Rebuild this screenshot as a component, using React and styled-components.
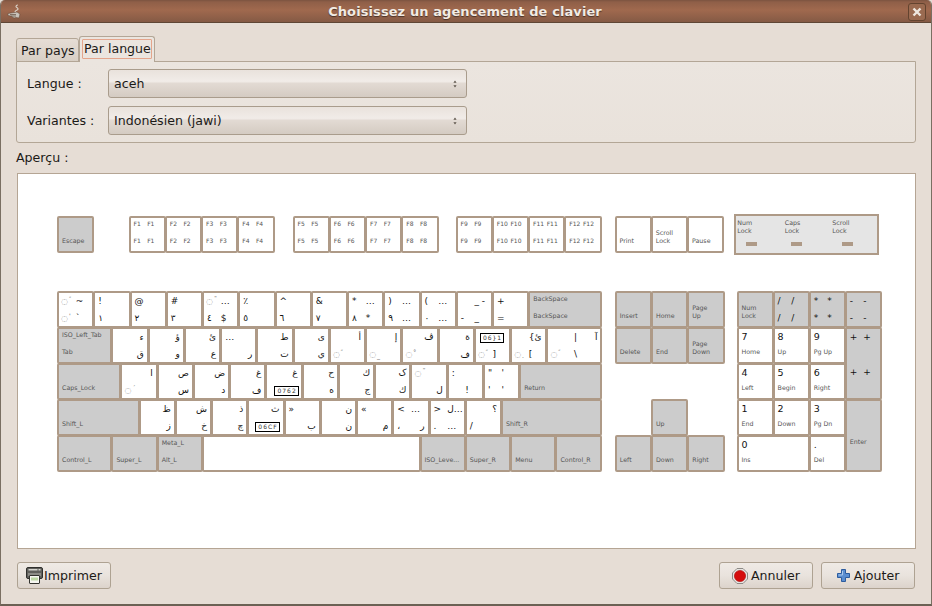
import styled, { createGlobalStyle } from "styled-components";

const GlobalStyle = createGlobalStyle`
  html, body { margin: 0; padding: 0; background: #e6ddd5; }
  body { font-family: "DejaVu Sans", "Noto Sans", sans-serif; font-size: 12.6px; color: #1c1a17; }
`;

const UNIT = 36.25;

// legend order: top left, top right, bottom left, bottom right
const sym = (tl = "", tr = "", bl = "", br = "", u = 1) => ({ kind: "sym", l: [tl, tr, bl, br], u });
const fn = (name) => ({ kind: "fn", l: [name, name, name, name], u: 1 });
const named = (name, u = 1, top = "") => ({ kind: "name", gray: true, l: [top, "", name, ""], u });
const stacked = (text, gray = true) => ({ kind: "name", gray, stack: text, u: 1 });
const pad = (digit, name) => ({ kind: "pad", l: [digit, "", name, ""], u: 1 });
const graySym = (a, b, rows = 1) => ({ kind: "sym", gray: true, l: [a, a, b, b], u: 1, rows });

const HexBox = styled.span`
  display: inline-block;
  border: 1px solid #000;
  font-size: 6px;
  line-height: 8px;
  letter-spacing: 1px;
  padding: 0 1px 0 2px;
  margin-left: ${(p) => p.$left || 0}px;
  color: #333;
`;

const RingGlyph = styled.span`
  font-size: 8px;
  color: #8a8a8a;
  margin-left: -1px;
  sup {
    font-size: 6px;
    line-height: 0;
    vertical-align: 3px;
    margin-left: 1px;
    color: #555;
  }
  sub {
    font-size: 6px;
    line-height: 0;
    vertical-align: -1px;
    margin-left: 1px;
    color: #555;
  }
`;

const ring = (mark, below) => (
  <RingGlyph>
    {"\u25CC"}
    {below ? <sub>{mark}</sub> : <sup>{mark}</sup>}
  </RingGlyph>
);

const alphaKeys = [
  sym(ring("\u2033"), "~", ring("'"), "`"),
  sym("!", "", "\u0661"),
  sym("@", "", "\u0662"),
  sym("#", "", "\u0663"),
  sym(ring("\u02DC"), "\u2026", "\u0664", "$"),
  sym("\u066A", "", "\u0665"),
  sym("^", "", "\u0666"),
  sym("&", "", "\u0667"),
  sym("*", "\u2026", "\u0668", "*"),
  sym(")", "\u2026", "\u0669", "\u2026"),
  sym("(", "\u2026", "\u0660", "\u2026"),
  sym("", "_ -", "-", "_"),
  sym("+", "", "="),
  { kind: "name", gray: true, l: ["BackSpace", "", "BackSpace", ""], u: 2 },

  { kind: "name", gray: true, l: ["ISO_Left_Tab", "", "Tab", ""], u: 1.5 },
  sym("", "\u0621", "", "\u0642"),
  sym("", "\u0624", "", "\u0648"),
  sym("", "\u0626", "", "\u0639"),
  sym("\u2026", "", "", "\u0631"),
  sym("", "\u0637", "", "\u062A"),
  sym("", "\u0649", "", "\u064A"),
  sym("", "\u0623", ring("\u2033"), ""),
  sym("", "\u0625", ring("_", true), ""),
  sym("", "\u06A4", ring("\u00B0"), ""),
  sym("", "\u0629", "", "\u0641"),
  sym(<HexBox $left={1}>06}1</HexBox>, "", ring("\u2033"), "]"),
  sym("", "\u200E{\u0626", ring(".", true), "["),
  sym("", "\u200E|\u2003\u2003\u0622", ring("\u2033"), "\\", 1.5),

  named("Caps_Lock", 1.75),
  sym("", "\u0627", ring("\u02CA"), ""),
  sym("", "\u0635", "", "\u0633"),
  sym("", "\u0636", "", "\u062F"),
  sym("", "\u063A", "", "\u0641"),
  sym("", "\u063A", <HexBox $left={4}>0762</HexBox>, ""),
  sym("", "\u062D", "", "\u0647"),
  sym("", "\u0643", "", "\u062C"),
  sym("", "\u06A9", "", "\u0643"),
  sym(ring("\u02DC"), "", "", "\u0644"),
  sym(":", "", "", "!"),
  sym('"', "'", "'", "'"),
  named("Return", 2.25),

  named("Shift_L", 2.25),
  sym("", "\u0638", "", "\u0632"),
  sym("", "\u0634", "", "\u062E"),
  sym("", "\u0630", "", "\u0686"),
  sym("", "\u062B", <HexBox $left={3}>06CF</HexBox>, ""),
  sym("\u00BB", "", "", "\u0628"),
  sym("", "\u0646", "", "\u0646"),
  sym("\u00AB", "", "", "\u0645"),
  sym("<", "\u2026", "\u060C", "\u0631"),
  sym(">", "\u200E\u0644\u2026", ".", "\u2026"),
  sym("", "\u061F", "/", ""),
  named("Shift_R", 2.75),

  named("Control_L", 1.5),
  named("Super_L", 1.25),
  named("Alt_L", 1.25, "Meta_L"),
  { kind: "sym", l: ["", "", "", ""], u: 6 },
  named("ISO_Leve...", 1.25),
  named("Super_R", 1.25),
  named("Menu", 1.25),
  named("Control_R", 1.25),
];

const navKeys = [
  named("Insert"), named("Home"), stacked("Page\nUp"),
  named("Delete"), named("End"), stacked("Page\nDown"),
  null, null, null,
  null, named("Up"), null,
  named("Left"), named("Down"), named("Right"),
];

const numpadKeys = [
  stacked("Num\nLock"), graySym("/", "/"), graySym("*", "*"), graySym("-", "-"),
  pad("7", "Home"), pad("8", "Up"), pad("9", "Pg Up"), graySym("+", "+", 2),
  pad("4", "Left"), pad("5", "Begin"), pad("6", "Right"),
  pad("1", "End"), pad("2", "Down"), pad("3", "Pg Dn"), { ...named("Enter"), rows: 2 },
  { ...pad("0", "Ins"), cols: 2 }, pad(".", "Del"),
];

const leds = [
  { label: "Num\nLock", offset: 9 },
  { label: "Caps\nLock", offset: 6 },
  { label: "Scroll\nLock", offset: 10 },
];

const Window = styled.div`
  box-sizing: border-box;
  width: 932px;
  height: 606px;
  display: flex;
  flex-direction: column;
  background: #e6ddd5;
  border-left: 1px solid #7a6f62;
  border-right: 1px solid #7a6f62;
  border-bottom: 2px solid #6b6154;
  border-radius: 5px 5px 0 0;
  overflow: hidden;
`;

const TitleBar = styled.div`
  flex: none;
  height: 23px;
  display: flex;
  align-items: center;
  padding: 0 5px 0 6px;
  background: linear-gradient(#7b5340 0, #8f5f48 2px, #a0694e 10px, #8e5f48 18px, #825843 23px);
  border-bottom: 1px solid #5f4635;
  box-sizing: border-box;
`;

const Title = styled.div`
  flex: 1;
  text-align: center;
  font-weight: bold;
  font-size: 13px;
  letter-spacing: 0.09px;
  color: #f2ebe3;
  text-shadow: 0 1px 1px #4a3226;
`;

const CloseButton = styled.div`
  box-sizing: border-box;
  width: 18px;
  height: 18px;
  margin-top: 1px;
  display: flex;
  align-items: center;
  justify-content: center;
  border: 1px solid #63432f;
  border-radius: 3px;
  background: #9a6a50;
`;

const Body = styled.div`
  flex: 1;
  display: flex;
  flex-direction: column;
  padding: 13px 15px 0 15px;
`;

const Tabs = styled.div`
  display: flex;
  align-items: flex-end;
  margin-bottom: -1px;
  position: relative;
  z-index: 1;
`;

const Tab = styled.div`
  box-sizing: border-box;
  width: ${(p) => p.$w}px;
  height: ${(p) => (p.$active ? 26 : 24)}px;
  padding: ${(p) => (p.$active ? "2px 2px 0" : "4px 0 0 4px")};
  border: 1px solid #b3a696;
  border-bottom: ${(p) => (p.$active ? "none" : "1px solid #b3a696")};
  border-radius: 3px 3px 0 0;
  background: ${(p) => (p.$active ? "#ebe5df" : "linear-gradient(#e6ddd5, #d8cfc5)")};
`;

const TabFocus = styled.div`
  height: 20px;
  line-height: 17px;
  box-sizing: border-box;
  padding-left: 1px;
  border: 1px solid #e4a58c;
  border-radius: 1px;
  white-space: nowrap;
`;

const Panel = styled.div`
  box-sizing: border-box;
  height: 82px;
  padding: 7px 0 0 10px;
  border: 1px solid #b3a696;
  border-radius: 0 0 3px 3px;
  background: linear-gradient(#ebe5df, #e9e2db);
  display: flex;
  flex-direction: column;
  gap: 8px;
`;

const FieldRow = styled.div`
  display: flex;
  align-items: center;
`;

const FieldLabel = styled.div`
  width: 81px;
`;

const Combo = styled.div`
  box-sizing: border-box;
  width: 359px;
  height: 29px;
  padding: 0 9px 0 5px;
  display: flex;
  align-items: center;
  justify-content: space-between;
  border: 1px solid #a99c8c;
  border-radius: 3px;
  background: linear-gradient(#e9e2dc 0, #f1ece8 42%, #e2dad3 50%, #d4cbc2 100%);
`;

const PreviewLabel = styled.div`
  margin: 7px 0 8px 0;
  line-height: 15px;
`;

const Canvas = styled.div`
  box-sizing: border-box;
  height: 376px;
  width: 899px;
  margin-left: 1px;
  padding: 42px 0 0 39px;
  background: #fff;
  border: 1px solid #b5a594;
  opacity: 0.999;
`;

const KeyRow = styled.div`
  display: flex;
  align-items: flex-start;
  margin-top: ${(p) => p.$top || 0}px;
`;

const KeyGroup = styled.div`
  flex: none;
  margin-left: ${(p) => p.$gap || 0}px;
  display: grid;
  grid-template-columns: repeat(${(p) => p.$cols}, ${(p) => p.$pitch}px);
  grid-auto-rows: 36.1px;
`;

const KeyCap = styled.div`
  box-sizing: border-box;
  min-width: 0;
  grid-column: span ${(p) => p.$span};
  grid-row: span ${(p) => p.$rows};
  margin: 0 -1px -1px 0;
  padding: 0 3px;
  display: grid;
  grid-template-columns: minmax(0, 1fr) minmax(0, 1fr);
  grid-template-rows: minmax(0, 1fr) minmax(0, 1fr);
  border: 2px solid #ae9a87;
  border-radius: 2px;
  background: ${(p) => (p.$gray ? "#cccccc" : "#ffffff")};
  font-family: "DejaVu Sans", sans-serif;
`;

const SIZES = { sym: 9, fn: 6, name: 6.3 };
const Legend = styled.span`
  align-self: start;
  white-space: pre;
  text-align: start;
  margin-top: ${(p) => (p.$big ? 2 : p.$size === 9 ? 3 : 2)}px;
  font-size: ${(p) => p.$size}px;
  line-height: ${(p) => (p.$size === 9 ? 10 : p.$big ? 11 : 8)}px;
  color: ${(p) => (p.$size >= 9 ? "#111" : "#555")};
`;

const StackedName = styled.span`
  grid-column: 1 / 3;
  grid-row: 1 / 3;
  align-self: end;
  margin-bottom: 7px;
  white-space: pre;
  font-size: 6.3px;
  line-height: 7.5px;
  color: #555;
`;

const LedPanel = styled.div`
  flex: none;
  box-sizing: border-box;
  width: 145px;
  height: 41px;
  margin: -2px 0 0 11px;
  padding: 0 0 0 1px;
  display: grid;
  grid-template-columns: repeat(3, 47.5px);
  border: 2px solid #ae9a87;
  background: #e5e5e5;
`;

const LedCell = styled.div`
  display: flex;
  flex-direction: column;
  padding-top: 3px;
`;

const LedLabel = styled.span`
  white-space: pre;
  font-size: 6.3px;
  line-height: 7.5px;
  color: #555;
`;

const LedBar = styled.div`
  width: 11px;
  height: 4px;
  margin: 8px 0 0 ${(p) => p.$offset}px;
  background: #ae9a87;
`;

const Footer = styled.div`
  display: flex;
  justify-content: space-between;
  padding: 13px 1px 0 1px;
`;

const ButtonGroup = styled.div`
  display: flex;
  gap: 8px;
`;

const Button = styled.div`
  box-sizing: border-box;
  width: 94px;
  height: 27px;
  display: flex;
  align-items: center;
  justify-content: center;
  gap: ${(p) => p.$gap}px;
  border: 1px solid #aea292;
  border-radius: 3px;
  background: linear-gradient(#efeae5 0, #e9e3dd 50%, #dcd3cb 100%);
`;

function Key({ spec }) {
  const { kind, gray, l, u, stack, rows = 1, cols } = spec;
  const span = cols || Math.round(u * 4);
  return (
    <KeyCap $span={span} $rows={rows} $gray={gray}>
      {stack ? (
        <StackedName>{stack}</StackedName>
      ) : (
        l.map((text, i) => {
          const big = kind === "pad" && i === 0;
          const size = big ? 9.5 : kind === "pad" ? SIZES.name : SIZES[kind];
          return (
            <Legend key={i} dir="auto" $size={size} $big={big}>
              {text}
            </Legend>
          );
        })
      )}
    </KeyCap>
  );
}

function TopGroup({ gap, keys }) {
  return (
    <KeyGroup $gap={gap} $cols={keys.length * 4} $pitch={UNIT / 4}>
      {keys.map((spec, i) => (
        <Key key={i} spec={spec} />
      ))}
    </KeyGroup>
  );
}

function fnGroup(from) {
  return [0, 1, 2, 3].map((i) => fn("F" + (from + i)));
}

const EmptySlot = styled.div`
  grid-column: span 4;
`;

function Keyboard() {
  return (
    <Canvas>
      <KeyRow>
        <TopGroup keys={[named("Escape")]} />
        <TopGroup gap={UNIT - 1} keys={fnGroup(1)} />
        <TopGroup gap={19} keys={fnGroup(5)} />
        <TopGroup gap={18} keys={fnGroup(9)} />
        <TopGroup
          gap={14}
          keys={[
            { ...named("Print"), gray: false },
            stacked("Scroll\nLock", false),
            { ...named("Pause"), gray: false },
          ]}
        />
        <LedPanel>
          {leds.map((led) => (
            <LedCell key={led.label}>
              <LedLabel>{led.label}</LedLabel>
              <LedBar $offset={led.offset} />
            </LedCell>
          ))}
        </LedPanel>
      </KeyRow>
      <KeyRow $top={36}>
        <KeyGroup $cols={60} $pitch={UNIT / 4}>
          {alphaKeys.map((spec, i) => (
            <Key key={i} spec={spec} />
          ))}
        </KeyGroup>
        <KeyGroup $gap={14} $cols={12} $pitch={UNIT / 4}>
          {navKeys.map((spec, i) =>
            spec ? <Key key={i} spec={spec} /> : <EmptySlot key={i} />
          )}
        </KeyGroup>
        <KeyGroup $gap={13} $cols={4} $pitch={36.1}>
          {numpadKeys.map((spec, i) => (
            <Key key={i} spec={{ ...spec, cols: spec.cols || 1 }} />
          ))}
        </KeyGroup>
      </KeyRow>
    </Canvas>
  );
}

function TitleIcon() {
  return (
    <svg width="15" height="15" viewBox="0 0 15 15">
      <path d="M1 9.5 10 8l3 2-1 4-3-.5-2 .5-3-2-3-.5z" fill="#c9c3ba" stroke="#5e4434" strokeWidth="0.5" />
      <path d="M3 10.5h6M4 12h5" stroke="#6d5a4c" strokeWidth="0.8" />
      <path d="M8 8c0-2 3-1.5 3-3S9 3.5 9 2.5 10 1 11 1" fill="none" stroke="#d8cfc5" strokeWidth="1.2" />
    </svg>
  );
}

function ArrowsIcon() {
  return (
    <svg width="4" height="8" viewBox="0 0 4 8">
      <path d="M2 .5 3.6 2.8H.4zM2 7.5.4 5.2h3.2z" fill="#5f574d" />
    </svg>
  );
}

function PrinterIcon() {
  return (
    <svg width="17" height="17" viewBox="0 0 17 17">
      <rect x="0.5" y="0.5" width="16" height="11" rx="1.5" fill="#5f5f5b" stroke="#2f2f2d" />
      <rect x="2.5" y="2" width="9" height="1.5" fill="#d4d4cf" />
      <rect x="12.5" y="2" width="2" height="1.5" fill="#d4d4cf" />
      <rect x="2" y="6" width="13" height="3" fill="#8b8b86" />
      <rect x="3.5" y="8.5" width="10" height="8" rx="0.5" fill="#f6f6f1" stroke="#33332f" />
      <rect x="5" y="10.5" width="7" height="3" fill="#bcd7a4" />
    </svg>
  );
}

function StopIcon() {
  return (
    <svg width="16" height="16" viewBox="0 0 16 16">
      <path d="M5 .5h6L15.5 5v6L11 15.5H5L.5 11V5z" fill="#e6e4e1" stroke="#8d8a86" />
      <circle cx="8" cy="8" r="5.6" fill="#d50d0d" stroke="#a90808" strokeWidth="0.6" />
    </svg>
  );
}

function PlusIcon() {
  return (
    <svg width="13" height="13" viewBox="0 0 13 13">
      <path
        d="M4.5 .5h4v4h4v4h-4v4h-4v-4h-4v-4h4z"
        fill="#5b8ed0"
        stroke="#2d5c9e"
        strokeLinejoin="round"
      />
      <path d="M5.5 2v4h-4" fill="none" stroke="#a9c8ec" />
    </svg>
  );
}

export default function App() {
  return (
    <>
      <GlobalStyle />
      <Window>
        <TitleBar>
          <TitleIcon />
          <Title>Choisissez un agencement de clavier</Title>
          <CloseButton>
            <svg width="10" height="10" viewBox="0 0 10 10">
              <path d="M1.5 1.5l7 7M8.5 1.5l-7 7" stroke="#efe7df" strokeWidth="2.4" />
            </svg>
          </CloseButton>
        </TitleBar>
        <Body>
          <Tabs>
            <Tab $w={63}>Par pays</Tab>
            <Tab $w={76} $active>
              <TabFocus>Par langue</TabFocus>
            </Tab>
          </Tabs>
          <Panel>
            <FieldRow>
              <FieldLabel>Langue :</FieldLabel>
              <Combo>
                aceh
                <ArrowsIcon />
              </Combo>
            </FieldRow>
            <FieldRow>
              <FieldLabel>Variantes :</FieldLabel>
              <Combo>
                Indonésien (jawi)
                <ArrowsIcon />
              </Combo>
            </FieldRow>
          </Panel>
          <PreviewLabel>Aperçu :</PreviewLabel>
          <Keyboard />
          <Footer>
            <Button $gap={1}>
              <PrinterIcon />
              Imprimer
            </Button>
            <ButtonGroup>
              <Button $gap={3}>
                <StopIcon />
                Annuler
              </Button>
              <Button $gap={4}>
                <PlusIcon />
                Ajouter
              </Button>
            </ButtonGroup>
          </Footer>
        </Body>
      </Window>
    </>
  );
}
